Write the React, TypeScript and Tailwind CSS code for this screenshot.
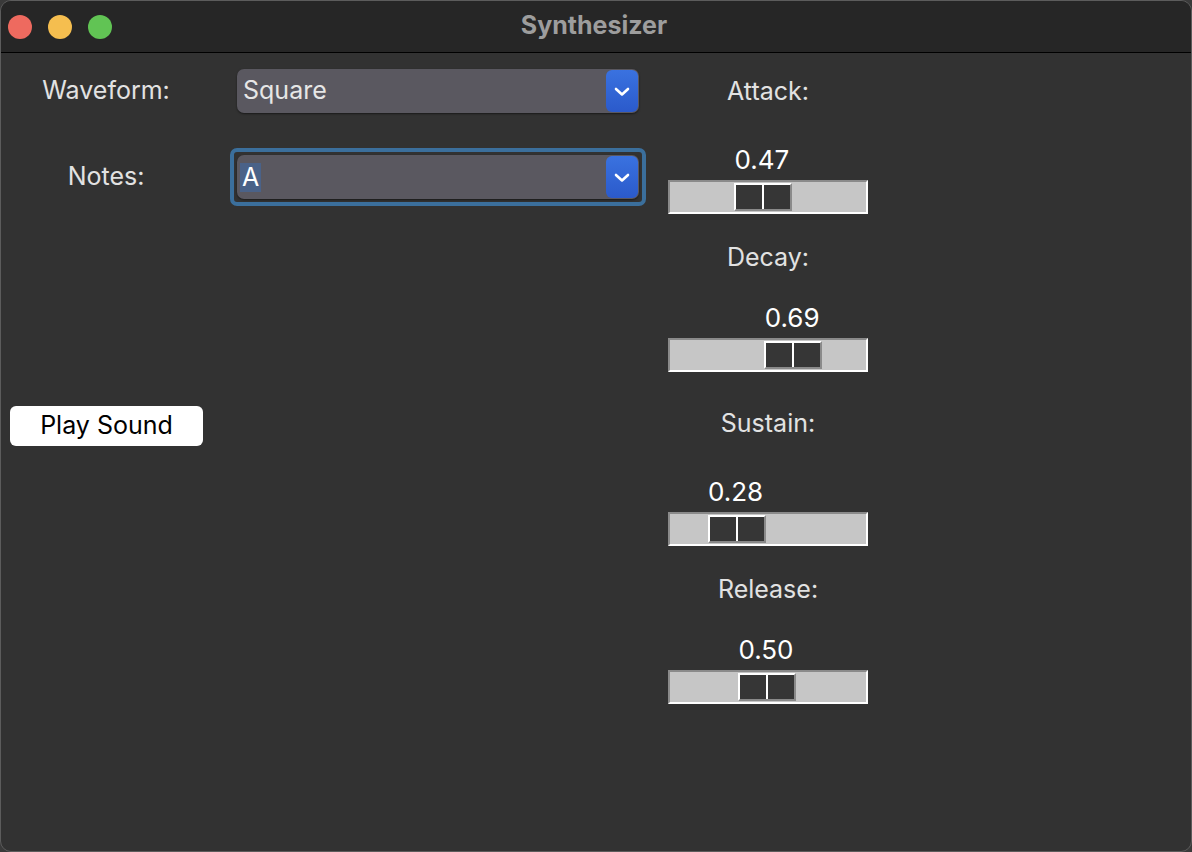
import React from 'react'

const font = { fontFamily: 'Inter, "Liberation Sans", sans-serif' }

function Chevron() {
  return (
    <svg width="18" height="11" viewBox="0 0 18 11" fill="none">
      <path d="M3 3l6 5.5L15 3" stroke="white" strokeWidth="2.6" strokeLinecap="round" strokeLinejoin="round" />
    </svg>
  )
}

function Combo({ value, focused }: { value: string; focused?: boolean }) {
  const box = (
    <div className="relative flex h-[44px] w-[402px] items-center rounded-[7px] bg-[#5a5860] shadow-[0_1px_2px_rgba(0,0,0,0.5)]">
      {focused ? (
        <span className="ml-[3px] bg-[#4a6288] px-[2px] text-[25px] leading-[29px] text-white">{value}</span>
      ) : (
        <span className="ml-[6px] text-[25px] text-[#e6e6e6]">{value}</span>
      )}
      <div className="absolute right-[1px] top-[1px] flex h-[42px] w-[32px] items-center justify-center rounded-[6px] bg-gradient-to-b from-[#3a72e0] to-[#2b5acb]">
        <Chevron />
      </div>
    </div>
  )
  if (!focused) return box
  return <div className="self-start rounded-[7px] border-[4px] border-[#3b6f9c] p-[3px]">{box}</div>
}

function Scale({ label, value, raised }: { label: string; value: number; raised?: boolean }) {
  const pos = value * 138
  return (
    <div className={raised ? 'flex w-[200px] flex-col pb-[8px]' : 'flex w-[200px] flex-col'}>
      <div className="h-[46px] text-center text-[25px] leading-[46px] text-[#e2e2e2]">{label}</div>
      <div className={raised ? 'h-[58px] pt-[26px]' : 'h-[66px] pt-[34px]'}>
        <div className="w-[58px] text-center text-[26px] leading-[24px] text-white" style={{ marginLeft: pos }}>
          {value.toFixed(2)}
        </div>
      </div>
      <div className="relative h-[34px] w-[200px] border-2 border-l-[#8a8a8a] border-t-[#8a8a8a] border-b-white border-r-white bg-[#c6c6c6]">
        <div
          className="absolute top-[1px] flex h-[28px] w-[58px] border-2 border-l-white border-t-white border-b-[#8a8a8a] border-r-[#8a8a8a]"
          style={{ left: pos - 1 }}
        >
          <div className="flex-1 bg-[#363636]" />
          <div className="w-[2px] bg-white" />
          <div className="flex-1 bg-[#363636]" />
        </div>
      </div>
    </div>
  )
}

export default function App() {
  return (
    <div className="h-[852px] w-[1192px] bg-[#3a3a3a]" style={font}>
      <div className="flex h-full w-full flex-col overflow-hidden rounded-[11px] border border-[#5c5c5c] bg-[#323232]">
        <div className="relative flex h-[52px] shrink-0 items-center border-b border-black bg-[#262626]">
          <div className="ml-[7px] flex gap-[16px]">
            <div className="h-[24px] w-[24px] rounded-full bg-[#ee6a5f]" />
            <div className="h-[24px] w-[24px] rounded-full bg-[#f5be4f]" />
            <div className="h-[24px] w-[24px] rounded-full bg-[#61c454]" />
          </div>
          <div className="absolute inset-x-0 top-[6px] pr-[4px] text-center text-[25px] font-bold text-[#9d9d9d]">Synthesizer</div>
        </div>

        <div className="flex flex-1">
          <div className="flex w-[228px] flex-col">
            <div className="mt-[16px] flex h-[44px] items-center justify-center pr-[18px] text-[25px] text-[#e2e2e2]">Waveform:</div>
            <div className="mt-[42px] flex h-[44px] items-center justify-center pr-[18px] text-[25px] text-[#e2e2e2]">Notes:</div>
            <button className="ml-[9px] mt-[207px] h-[40px] w-[193px] rounded-[6px] bg-white text-[25px] text-black">Play Sound</button>
          </div>

          <div className="flex w-[439px] flex-col items-start pl-[1px]">
            <div className="ml-[7px] mt-[16px]">
              <Combo value="Square" />
            </div>
            <div className="mt-[35px]">
              <Combo value="A" focused />
            </div>
          </div>

          <div className="mt-[15px] flex flex-col gap-[20px]">
            <Scale label="Attack:" value={0.47} />
            <Scale label="Decay:" value={0.69} raised />
            <Scale label="Sustain:" value={0.28} />
            <Scale label="Release:" value={0.5} raised />
          </div>
        </div>
      </div>
    </div>
  )
}
